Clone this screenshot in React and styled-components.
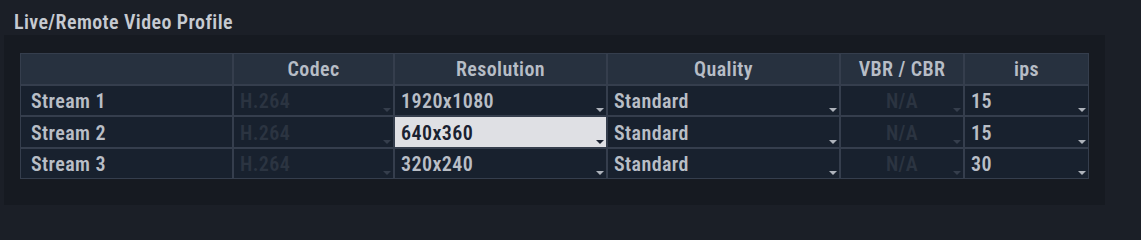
import styled, { createGlobalStyle } from "styled-components";

const GlobalStyle = createGlobalStyle`
  html, body {
    margin: 0;
    padding: 0;
    background: #1b1f27;
    height: 220px;
    overflow: hidden;
  }
  body {
    font-family: Roboto, "DejaVu Sans Condensed", sans-serif;
    font-stretch: 75%;
    letter-spacing: 0.4px;
  }
`;

/* PAGE */
const Page = styled.div`
  width: 1141px;
  height: 220px;
  background: #1b1f27;
  box-sizing: border-box;
  padding: 0 36px 0 4px;
`;

const Title = styled.h3`
  margin: 0;
  height: 35px;
  line-height: 44px;
  padding-left: 10px;
  font-size: 20px;
  font-weight: 600;
  color: #c6cad1;
`;

/* PANEL AROUND THE TABLE */
const Panel = styled.section`
  background: #161a21;
  height: 170px;
  box-sizing: border-box;
  padding: 18px 16px 0;
`;

const Table = styled.table`
  width: 1069px;
  table-layout: fixed;
  border-collapse: separate;
  border-spacing: 0;
  font-size: 20px;
  font-weight: 600;
`;

const HeadCell = styled.th`
  height: 31.5px;
  box-sizing: border-box;
  border: 1px solid #353e4d;
  background: #27313f;
  color: #b7bdc6;
  font-weight: 600;
  text-align: center;
  padding: 0 6px;
`;

const Cell = styled.td`
  position: relative;
  height: 31.5px;
  box-sizing: border-box;
  border: 1px solid #353e4d;
  background: ${(p) => (p.$selected ? "#dfe0e4" : "#18212e")};
  color: ${(p) =>
    p.$selected ? "#1a2130" : p.$disabled ? "#2b3441" : "#b9bec6"};
  text-align: ${(p) => (p.$center ? "center" : "left")};
  padding: 2px 6px 0 ${(p) => (p.$label ? "10px" : "6px")};
  white-space: nowrap;

  ${(p) =>
    p.$arrow &&
    `
    &::after {
      content: "";
      position: absolute;
      right: 2px;
      bottom: 3px;
      border-left: 4px solid transparent;
      border-right: 4px solid transparent;
      border-top: 4px solid ${
        p.$selected ? "#1a2130" : p.$disabled ? "#353e4c" : "#aeb3bb"
      };
    }
  `}
`;

const columns = [
  { label: "", width: 213 },
  { label: "Codec", width: 161 },
  { label: "Resolution", width: 213 },
  { label: "Quality", width: 233 },
  { label: "VBR / CBR", width: 124 },
  { label: "ips", width: 125 },
];

const streams = [
  { name: "Stream 1", resolution: "1920x1080", quality: "Standard", ips: "15" },
  { name: "Stream 2", resolution: "640x360", quality: "Standard", ips: "15", selected: true },
  { name: "Stream 3", resolution: "320x240", quality: "Standard", ips: "30" },
];

export default function App() {
  return (
    <>
      <GlobalStyle />
      <Page>
        <Title>Live/Remote Video Profile</Title>
        <Panel>
          <Table>
            <colgroup>
              {columns.map((c, i) => (
                <col key={i} style={{ width: c.width }} />
              ))}
            </colgroup>
            <thead>
              <tr>
                {columns.map((c, i) => (
                  <HeadCell key={i}>{c.label}</HeadCell>
                ))}
              </tr>
            </thead>
            <tbody>
              {streams.map((s) => (
                <tr key={s.name}>
                  <Cell $label>{s.name}</Cell>
                  <Cell $disabled $arrow>H.264</Cell>
                  <Cell $arrow $selected={s.selected}>{s.resolution}</Cell>
                  <Cell $arrow>{s.quality}</Cell>
                  <Cell $disabled $arrow $center>N/A</Cell>
                  <Cell $arrow>{s.ips}</Cell>
                </tr>
              ))}
            </tbody>
          </Table>
        </Panel>
      </Page>
    </>
  );
}
